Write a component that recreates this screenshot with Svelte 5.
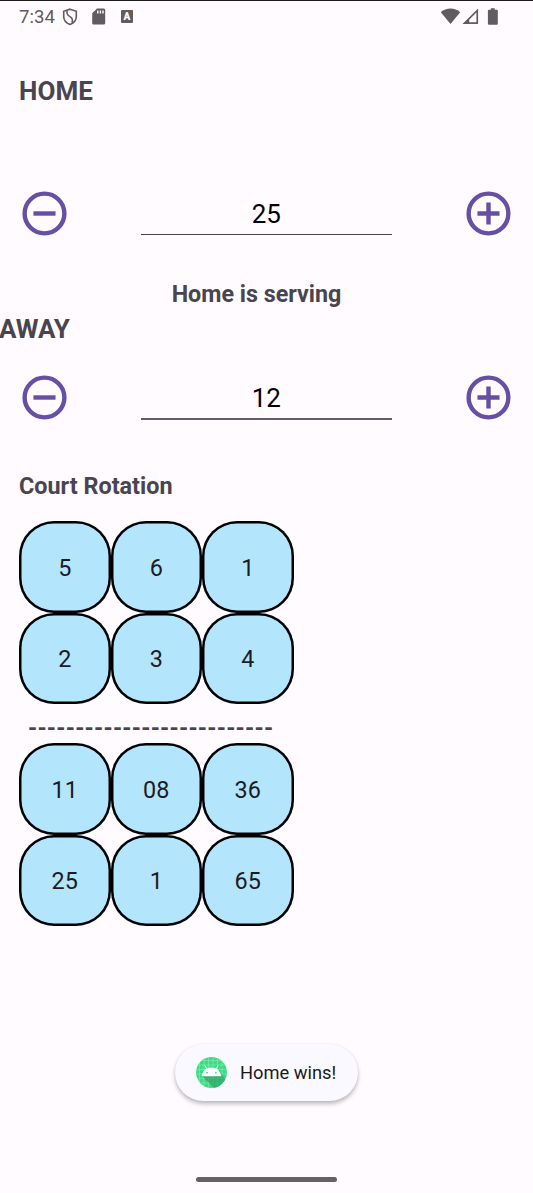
<script>
  const teams = [
    { name: 'home', score: 25 },
    { name: 'away', score: 12 },
  ];
  const homeCourt = ['5', '6', '1', '2', '3', '4'];
  const awayCourt = ['11', '08', '36', '25', '1', '65'];
  const net = '-'.repeat(26);
</script>

{#snippet counter(team)}
  <div class="counter {team.name}">
    <button aria-label="Decrease">
      <svg viewBox="0 0 24 24"><circle cx="12" cy="12" r="9" /><path d="M7 12h10" /></svg>
    </button>
    <div class="score">{team.score}</div>
    <button aria-label="Increase">
      <svg viewBox="0 0 24 24"><circle cx="12" cy="12" r="9" /><path d="M7 12h10M12 7v10" /></svg>
    </button>
  </div>
{/snippet}

{#snippet court(players)}
  <div class="court">
    {#each players as player}
      <div class="cell">{player}</div>
    {/each}
  </div>
{/snippet}

<main>
  <header>
    <span class="time">7:34</span>
    <svg class="shield" width="16" height="18" viewBox="0 0 16 18">
      <path d="M8 1.2L14.3 3.3V8.4C14.3 12 11.6 15 8 16.4C4.4 15 1.7 12 1.7 8.4V3.3Z" />
      <path d="M5.2 2.6C4.1 5.5 5.6 7.2 8 8.6C10.5 10 11 12 10 14.8" />
    </svg>
    <svg class="card" width="14" height="17" viewBox="0 0 14 17">
      <path fill="#5f5d61" d="M5 0.5H11.7Q13.2 .5 13.2 2V15Q13.2 16.5 11.7 16.5H1.7Q.2 16.5 .2 15V5.3Z" />
      <path stroke="#fffbff" stroke-width="1.4" d="M5.8 2.5V5.6M8.4 2.5V5.6M11 2.5V5.6" />
    </svg>
    <span class="input-badge">A</span>
    <svg class="signals" width="60" height="18" viewBox="0 0 60 18">
      <path fill="#5f5d61" d="M.8 4.2C6-.6 15-.6 20.2 4.2L10.5 16Z" />
      <path fill="#5f5d61" fill-rule="evenodd" d="M38.1 .4V16H22.5ZM36.4 4.6L29.2 11.8V14.3H36.4Z" />
      <path fill="#5f5d61" d="M50.8 .2H54.8V1.7H56.7Q57.8 1.7 57.8 2.8V15.6Q57.8 16.8 56.7 16.8H49Q47.9 16.8 47.9 15.6V2.8Q47.9 1.7 49 1.7H50.8Z" />
    </svg>
  </header>

  <h1 class="home-title">HOME</h1>
  {@render counter(teams[0])}
  <p class="serving">Home is serving</p>
  <h1 class="away-title">AWAY</h1>
  {@render counter(teams[1])}
  <h2>Court Rotation</h2>
  {@render court(homeCourt)}
  <div class="net">{net}</div>
  {@render court(awayCourt)}

  <div class="toast">
    <svg width="31" height="31" viewBox="0 0 31 31">
      <defs><clipPath id="disc"><circle cx="15.5" cy="15.5" r="15.4" /></clipPath></defs>
      <g clip-path="url(#disc)">
        <rect width="31" height="31" fill="#3ddc84" />
        <path stroke="#8beab5" stroke-width=".6" d="M3.5 0V31M8 0V31M12.5 0V31M17 0V31M21.5 0V31M26 0V31M0 3.5H31M0 8H31M0 12.5H31M0 17H31M0 21.5H31M0 26H31" />
        <path fill="#2b9d61" fill-opacity=".65" d="M6 19L18 31H31V25L23 13L25 19Z" />
      </g>
      <path fill="#fff" d="M5.7 19.2C6.1 14.4 10 10.4 15.5 10.4S24.9 14.4 25.3 19.2Z" />
      <path stroke="#fff" stroke-width="1" stroke-linecap="round" d="M11 12L9 8.8M20 12L22 8.8" />
      <circle cx="11.1" cy="15.7" r=".9" fill="#3ddc84" />
      <circle cx="19.9" cy="15.7" r=".9" fill="#3ddc84" />
    </svg>
    <span>Home wins!</span>
  </div>
  <div class="handle"></div>
</main>

<style>
  :global(body) {
    background: #fffbff;
  }

  main {
    box-sizing: border-box;
    width: 533px;
    height: 1193px;
    overflow: hidden;
    display: flex;
    flex-direction: column;
    border-top: 1px solid #1c1b1d;
    background: #fffbff;
    color: #49454f;
    font-family: Roboto, sans-serif;
  }

  svg {
    display: block;
    flex: none;
  }

  header {
    display: flex;
    align-items: center;
    height: 31px;
    padding-left: 19px;
    color: #5f5d61;
  }

  .time {
    width: 43px;
    font-size: 18.6px;
    line-height: 30px;
  }

  .shield path {
    fill: none;
    stroke: #5f5d61;
    stroke-width: 1.6;
  }

  .card {
    margin-left: 14px;
  }

  .input-badge {
    box-sizing: border-box;
    width: 12px;
    height: 13px;
    margin-left: 15px;
    border-radius: 1px;
    background: #5f5d61;
    color: #fffbff;
    font-size: 10px;
    font-weight: 900;
    line-height: 13px;
    text-align: center;
  }

  .signals {
    margin-left: 307px;
  }

  h1,
  h2,
  p {
    margin: 0;
    font-weight: 700;
  }

  h1 {
    font-size: 26px;
    line-height: 36px;
  }

  .home-title {
    margin: 41px 0 0 19px;
    letter-spacing: 0.1px;
  }

  .away-title {
    margin: 1px 0 0 -1px;
  }

  .counter {
    display: flex;
    justify-content: space-between;
    height: 53px;
    padding: 0 18.6px 0 18.2px;
  }

  .counter.home {
    margin-top: 78px;
  }

  .counter.away {
    margin-top: 24px;
  }

  button {
    width: 52.8px;
    height: 53px;
    padding: 0;
    border: 0;
    background: none;
  }

  button svg {
    width: 53px;
    height: 53px;
    fill: none;
    stroke: #6750a4;
    stroke-width: 2;
  }

  .score {
    box-sizing: border-box;
    width: 251px;
    height: 48px;
    border-bottom: 1px solid #49454f;
    color: #000;
    font-size: 26px;
    line-height: 55px;
    text-align: center;
  }

  .away .score {
    height: 49px;
    border-bottom: 2px solid #625b71;
  }

  .serving {
    margin-top: 38px;
    font-size: 23.3px;
    line-height: 32px;
    text-align: center;
    padding-right: 20px;
  }

  h2 {
    margin: 46px 0 0 19px;
    font-size: 23.4px;
    line-height: 32px;
  }

  .court {
    display: grid;
    grid-template-columns: repeat(3, 91.5px);
    grid-auto-rows: 91.5px;
    margin-left: 19px;
  }

  h2 + .court {
    margin-top: 19px;
  }

  .cell {
    box-sizing: border-box;
    display: flex;
    align-items: center;
    justify-content: center;
    padding-top: 2px;
    border-radius: 35px;
    background: #b3e5fc;
    box-shadow: inset 0 0 0 2.5px #000;
    color: #1d1b20;
    font-size: 23.4px;
  }

  .net {
    height: 39px;
    margin-left: 28px;
    font-size: 23.4px;
    font-weight: 700;
    letter-spacing: 0.22px;
    line-height: 49px;
    white-space: nowrap;
  }

  .toast {
    box-sizing: border-box;
    display: flex;
    align-items: center;
    align-self: center;
    gap: 13px;
    width: 183px;
    height: 57px;
    margin-top: 118px;
    padding-left: 21px;
    border-radius: 29px;
    background: #faf9ff;
    box-shadow: 0 3px 4px rgb(0 0 0 / 25%), 0 0 2px rgb(0 0 0 / 8%);
    color: #1a1b20;
    font-size: 18.3px;
    white-space: nowrap;
  }

  .handle {
    align-self: center;
    width: 141px;
    height: 5px;
    margin-top: 76px;
    border-radius: 3px;
    background: #656266;
  }
</style>
